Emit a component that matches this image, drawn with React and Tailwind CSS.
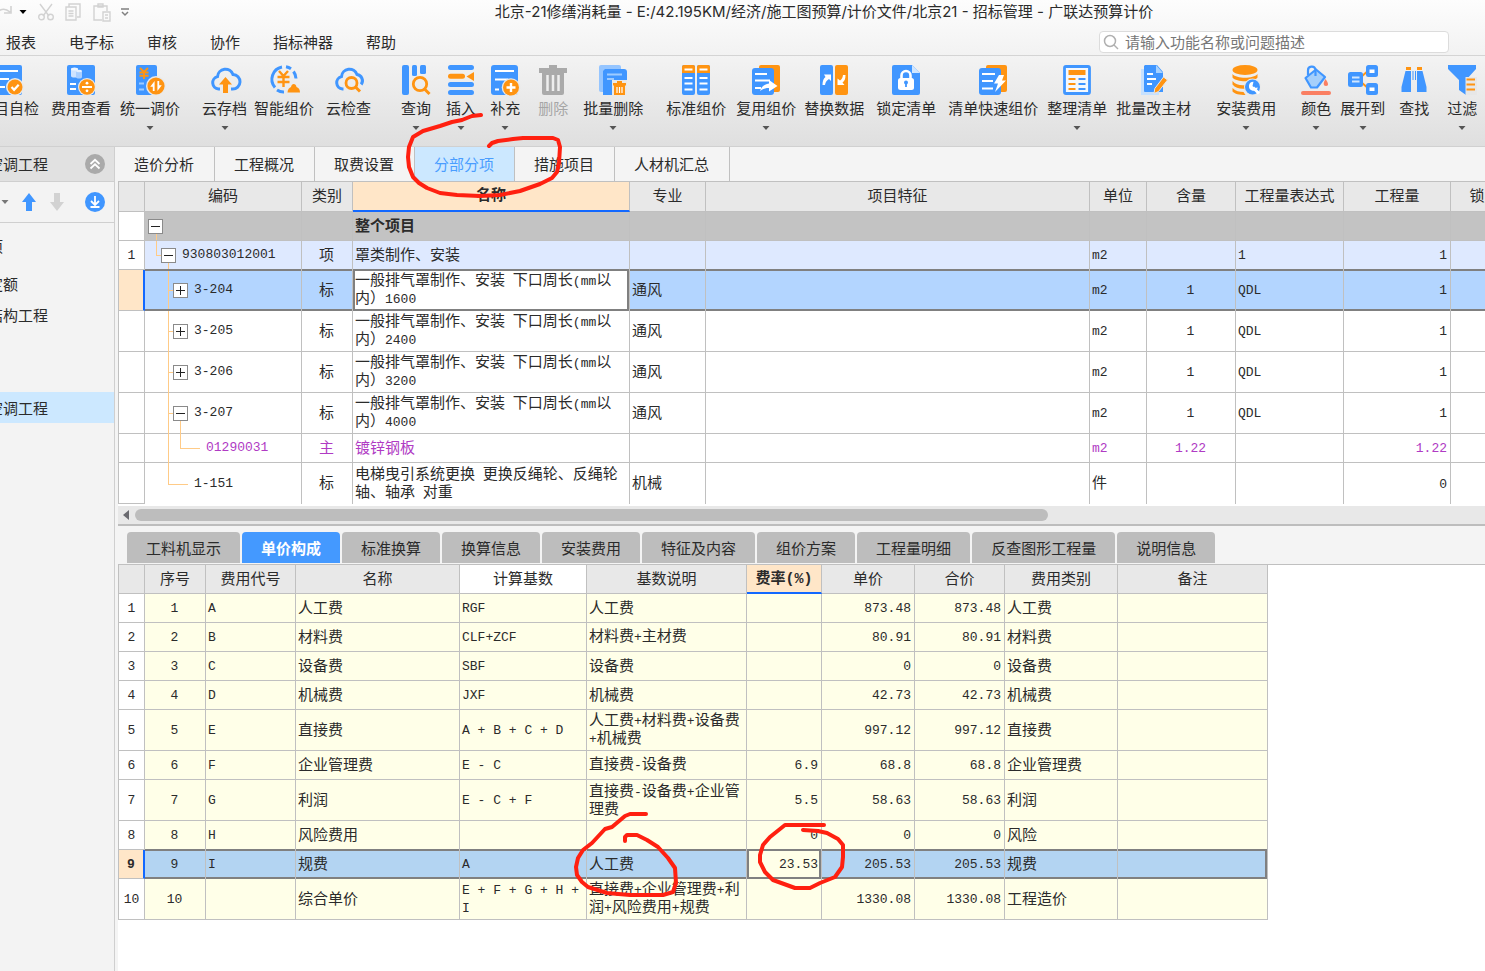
import clsx from "clsx";

const toolIcons = {
  check: (
    <>
      <rect width="27" height="30" rx="2" fill="#4096ff" />
      <path d="M4 6h19M4 14h10M4 22h6" stroke="#fff" strokeWidth="2" />
      <circle cx="20" cy="22" r="9" fill="#e9e9e9" />
      <circle cx="20" cy="22" r="7.5" fill="#ff9412" />
      <path d="M16.5 22l2.6 2.8 4.6-5" fill="none" stroke="#fff" strokeWidth="2.2" />
    </>
  ),
  cost: (
    <>
      <rect width="28" height="30" rx="2" fill="#4096ff" />
      <path d="M4 4v7c0 2 7 2 7 0V4z" fill="#cfe4ff" />
      <ellipse cx="7.5" cy="4" rx="3.5" ry="1.5" fill="#eef6ff" />
      <path d="M9 6v6c0 2 6 2 6 0V6z" fill="#a9cfff" />
      <ellipse cx="12" cy="6" rx="3" ry="1.3" fill="#e4f0ff" />
      <path d="M3 19h6M3 24h6" stroke="#fff" strokeWidth="2.2" />
      <circle cx="20" cy="22" r="9" fill="#e9e9e9" />
      <circle cx="20" cy="22" r="7.8" fill="#ff9412" />
      <path d="M15 22h10" stroke="#fff" strokeWidth="2" />
      <circle cx="20" cy="18.2" r="1.4" fill="#fff" />
      <circle cx="20" cy="25.8" r="1.4" fill="#fff" />
    </>
  ),
  adjust: (
    <>
      <rect width="21" height="30" rx="2" fill="#4096ff" />
      <path d="M4 3l4 4 4-4M8 7v7M3.5 7.5h9M3.5 10.8h9" fill="none" stroke="#ff9412" strokeWidth="1.9" />
      <path d="M3 18.5h5M3 24.5h5" stroke="#9ecbff" strokeWidth="2.2" />
      <circle cx="20" cy="21" r="10" fill="#e9e9e9" />
      <circle cx="20" cy="21" r="8.6" fill="#ff9412" />
      <path d="M18.6 16v10h-1.8v-4.2h-2.6zM21.4 26V16h1.8v4.2h2.6z" fill="#fff" />
    </>
  ),
  cloudUp: (
    <>
      <path d="M9 24H7.500a6.300 6.300 0 0 1-1-12.400A8 8 0 0 1 22 9.500a6.300 6.300 0 0 1-.5 14.500H20" fill="none" stroke="#4096ff" strokeWidth="3" />
      <path d="M14.500 12l6.500 7.500h-4V28h-5v-8.500h-4z" fill="#ff9412" />
    </>
  ),
  smart: (
    <>
      <path d="M5 22.500A12.500 12.500 0 0 1 12 2M16 1.800a12.500 12.500 0 0 1 5 2M23.500 6.500a12.500 12.500 0 0 1 2.500 7M7 25a12 12 0 0 0 7 2" fill="none" stroke="#4096ff" strokeWidth="3" />
      <path d="M9 6l4.500 5 4.500-5M13.500 11v11M7.500 12h12M7.500 17h12" fill="none" stroke="#ff9412" strokeWidth="2.400" />
      <path d="M17.500 27.500c0-3 2-5 3.500-5.500.5-4 5-4 5.500 0 2 .5 3.500 2.500 3.500 5.500z" fill="#ff9412" />
    </>
  ),
  cloudSearch: (
    <>
      <path d="M8.500 24h-1a6.300 6.300 0 0 1-1-12.400A8 8 0 0 1 22 9.500a6.300 6.300 0 0 1 4.200 10" fill="none" stroke="#4096ff" strokeWidth="3" />
      <circle cx="16.500" cy="18" r="5.500" fill="none" stroke="#ff9412" strokeWidth="2.800" />
      <path d="M20.500 22l4.500 4.500" stroke="#ff9412" strokeWidth="3" />
    </>
  ),
  query: (
    <>
      <rect width="7" height="30" rx="2" fill="#4096ff" />
      <rect x="10" width="5" height="11" rx="1.500" fill="#4096ff" />
      <rect x="18" width="6" height="9" rx="1.500" fill="#4096ff" />
      <circle cx="18" cy="19" r="6.700" fill="none" stroke="#ff9412" strokeWidth="2.800" />
      <path d="M22.500 24l5 5" stroke="#ff9412" strokeWidth="3" />
    </>
  ),
  insert: (
    <>
      <path d="M3.500 2.500h21M3.500 19.500h21M3.500 27.500h21" stroke="#4096ff" strokeWidth="5" strokeLinecap="round" />
      <path d="M3.500 11.300h12" stroke="#ff9412" strokeWidth="5" strokeLinecap="round" />
      <path d="M27 7v9l-7.500-4.500z" fill="#ff9412" />
    </>
  ),
  supplement: (
    <>
      <rect width="27" height="30" rx="3" fill="#4096ff" />
      <path d="M4 6h19M4 14.500h13M4 24.500h4" stroke="#fff" strokeWidth="2.200" />
      <circle cx="20" cy="22.500" r="9.300" fill="#e9e9e9" />
      <circle cx="20" cy="22.500" r="8" fill="#ff9412" />
      <path d="M20 18v9M15.500 22.500h9" stroke="#fff" strokeWidth="2.400" />
    </>
  ),
  remove: (
    <>
      <path d="M10 0h8v3h-8z" fill="#aaa" />
      <path d="M0 3h28v5H0z" fill="#aaa" />
      <path d="M3 8h22v20a2 2 0 0 1-2 2H5a2 2 0 0 1-2-2z" fill="#aaa" />
      <path d="M8.500 10v16M14 10v16M19.500 10v16" stroke="#eee" strokeWidth="2.500" />
    </>
  ),
  batchRemove: (
    <>
      <rect width="22" height="27" rx="2" fill="#95c5ff" />
      <path d="M6 4h19a3 3 0 0 1 3 3v23H4V6z" fill="#4096ff" />
      <path d="M8 9.500h15M8 14h7" stroke="#9ecbff" strokeWidth="2" />
      <path d="M13 15h15v15H13z" fill="#e9e9e9" />
      <path d="M18 16h5v2h-5zM14 18h13v2.500H14zM15 20h11v10H15z" fill="#ff9412" />
      <path d="M18 22v6M20.500 22v6M23 22v6" stroke="#fff" strokeWidth="1.200" />
    </>
  ),
  standard: (
    <>
      <rect width="13" height="30" rx="2" fill="#4096ff" />
      <rect x="15" width="13" height="30" rx="2" fill="#4096ff" />
      <path d="M0 8V2a2 2 0 0 1 2-2h9a2 2 0 0 1 2 2v6zM15 8V2a2 2 0 0 1 2-2h9a2 2 0 0 1 2 2v6z" fill="#ff9412" />
      <path d="M2.500 4.500h8M17.500 4.500h8M2.500 13h8M17.500 13h8M2.500 18.500h8M17.500 18.500h8M2.500 24.500h8M17.500 24.500h8" stroke="#fff" strokeWidth="1.800" />
    </>
  ),
  reuse: (
    <>
      <rect x="7" width="21" height="27" rx="2" fill="#ff9412" />
      <rect y="3" width="22" height="27" rx="3" fill="#4096ff" />
      <path d="M3 9h12M3 15.500h15M3 23h6" stroke="#fff" strokeWidth="2.200" />
      <path d="M8 26c2-5 5-7 9-7.500V15l8.500 6-8.500 5.500V23c-4 0-6.500 1-9 3z" fill="#fff" />
    </>
  ),
  replace: (
    <>
      <rect width="13" height="30" rx="2" fill="#4096ff" />
      <rect x="15" width="13" height="30" rx="2" fill="#ff9412" />
      <path d="M2.500 20c0-4 1-6.500 3-8L4 9.500h7V16l-2-2c-2.500 1.500-3.500 3-4 6zM25.500 10c0 4-1 6-3 7.500l2 2.500h-7v-6.500l2.500 2C22 14 22.500 13 23 10z" fill="#fff" />
    </>
  ),
  lock: (
    <>
      <path d="M2 0h18l8 8v20a2 2 0 0 1-2 2H2a2 2 0 0 1-2-2V2a2 2 0 0 1 2-2z" fill="#4096ff" />
      <path d="M20 0l8 8h-8z" fill="#cfe6ff" />
      <rect x="6" y="13" width="16" height="12" rx="2.500" fill="#fff" />
      <path d="M9.500 14v-3.500a4.500 4.500 0 0 1 9 0V14" fill="none" stroke="#fff" strokeWidth="2.600" />
      <circle cx="14" cy="17.500" r="2" fill="#4096ff" />
      <path d="M14 18v4" stroke="#4096ff" strokeWidth="1.800" />
    </>
  ),
  quick: (
    <>
      <rect x="7" width="21" height="27" rx="2" fill="#ff9412" />
      <rect y="3" width="22" height="27" rx="3" fill="#4096ff" />
      <path d="M3 9h13M3 16h11M3 23.500h11" stroke="#fff" strokeWidth="2.200" />
      <path d="M20 10h5l-2 5.500h4L16 27l3-8.500h-4z" fill="#fff" />
    </>
  ),
  arrange: (
    <>
      <rect x="1.500" y="1.500" width="25" height="27" rx="1.500" fill="#f4f8fd" stroke="#4096ff" strokeWidth="2.800" />
      <path d="M5.500 7.500h17" stroke="#ff9412" strokeWidth="5" />
      <path d="M5.500 14h7M5.500 19h7M5.500 24h7" stroke="#ff9412" strokeWidth="1.800" />
      <path d="M15.500 14h7M15.500 19h7M15.500 24h7" stroke="#4096ff" strokeWidth="1.800" />
    </>
  ),
  material: (
    <>
      <path d="M1 4h18v26H1z" fill="#c6e1ff" />
      <path d="M5 0h12l6 7v20H5a1 1 0 0 1-1-1V1z" fill="#4096ff" />
      <path d="M16 0l7 8h-7z" fill="#a9d3ff" />
      <path d="M7 9h6M7 14h9M7 19h5" stroke="#fff" strokeWidth="2" />
      <path d="M23.500 12l4 3-9 11.500-4.500 2 .8-5z" fill="#ff9412" stroke="#e9e9e9" />
    </>
  ),
  install: (
    <>
      <ellipse cx="13" cy="5" rx="12.500" ry="5" fill="#ff9412" />
      <path d="M.5 9c4 5 21 5 25 0v3.500c-4 5-21 5-25 0zM.5 16c3 4 9 5 14 4v3.500c-5 1-11 0-14-4zM.5 23c3 3 7 4 11 4l2 3c-6 0-11-1-13-3.500z" fill="#ff9412" />
      <circle cx="20.500" cy="22" r="8.500" fill="#e9e9e9" />
      <circle cx="20.500" cy="22" r="7.500" fill="#4096ff" />
      <path d="M27 28.500l-6-6" stroke="#fff" strokeWidth="3" />
      <path d="M21.500 16.800a4.500 4.500 0 1 0 4.300 5.700l-3.300.5-2-2z" fill="#fff" />
    </>
  ),
  color: (
    <>
      <path d="M3.500 13L14 4.500l9 7.500-8 10.500H9z" fill="#a5cffb" stroke="#4096ff" strokeWidth="2.200" strokeLinejoin="round" />
      <path d="M6 10V5.500a3.800 3.800 0 0 1 7.500-1V11" fill="none" stroke="#4096ff" strokeWidth="2.200" />
      <path d="M23.500 14c3 4 3.500 7 .5 7s-3-3-.5-7z" fill="#fa7f62" />
      <path d="M1 28h26" stroke="#fa7f62" strokeWidth="4" strokeLinecap="round" />
    </>
  ),
  expand: (
    <>
      <path d="M12 12l8-7M12 17l8 7" stroke="#ff9412" strokeWidth="2" />
      <rect x="-1" y="7" width="15" height="15" rx="2.500" fill="#4096ff" />
      <rect x="17" width="12" height="12" rx="2.500" fill="#4096ff" />
      <rect x="17" y="18" width="12" height="12" rx="2.500" fill="#4096ff" />
      <path d="M3 12.500h7.500M3 16.500h7.500" stroke="#cfe6ff" strokeWidth="2" />
      <path d="M20.500 4.500h5v3.500h-5zM20.500 22.500h5v3.500h-5z" fill="#fff" />
    </>
  ),
  find: (
    <>
      <path d="M6 2h5v3H6zM17 2h5v3h-5z" fill="#ff9412" />
      <path d="M5.500 6H11v21H1.500v-5zM22.500 6H17v21h9.500v-5z" fill="#4096ff" />
      <path d="M12.500 6h1v9h-1zM15 6h1v9h-1z" fill="#4096ff" />
    </>
  ),
  filter: (
    <>
      <path d="M0 0h28v4L18 15v15l-7-5V15L0 4z" fill="#4096ff" />
      <path d="M17.500 12H29v18H17.500z" fill="#e7e7e7" />
      <path d="M18.500 14.500h8.500M18.500 19.500h8.500M18.500 24.500h8.500" stroke="#ff9412" strokeWidth="2" />
    </>
  )
};

const tools = [
  { label: "项目自检", icon: "check", gap: "" },
  { label: "费用查看", icon: "cost", gap: "ml-3" },
  { label: "统一调价", icon: "adjust", gap: "ml-[9px]", menu: true },
  { label: "云存档", icon: "cloudUp", gap: "ml-[22px]", menu: true },
  { label: "智能组价", icon: "smart", gap: "ml-[7px]" },
  { label: "云检查", icon: "cloudSearch", gap: "ml-3" },
  { label: "查询", icon: "query", gap: "ml-[30px]", menu: true },
  { label: "插入", icon: "insert", gap: "ml-[15px]", menu: true },
  { label: "补充", icon: "supplement", gap: "ml-[14px]", menu: true },
  { label: "删除", icon: "remove", gap: "ml-[18px]", disabled: true },
  { label: "批量删除", icon: "batchRemove", gap: "ml-[15px]", menu: true },
  { label: "标准组价", icon: "standard", gap: "ml-[23px]" },
  { label: "复用组价", icon: "reuse", gap: "ml-[10px]", menu: true },
  { label: "替换数据", icon: "replace", gap: "ml-2" },
  { label: "锁定清单", icon: "lock", gap: "ml-3" },
  { label: "清单快速组价", icon: "quick", gap: "ml-3" },
  { label: "整理清单", icon: "arrange", gap: "ml-[9px]", menu: true },
  { label: "批量改主材", icon: "material", gap: "ml-[9px]" },
  { label: "安装费用", icon: "install", gap: "ml-[25px]", menu: true },
  { label: "颜色", icon: "color", gap: "ml-[25px]", menu: true },
  { label: "展开到", icon: "expand", gap: "ml-[9px]", menu: true },
  { label: "查找", icon: "find", gap: "ml-[14px]" },
  { label: "过滤", icon: "filter", gap: "ml-[18px]", menu: true }
];

const menus = ["报表", "电子标", "审核", "协作", "指标神器", "帮助"];
const pageTabs = ["造价分析", "工程概况", "取费设置", "分部分项", "措施项目", "人材机汇总"];
const detailTabs = [
  "工料机显示",
  "单价构成",
  "标准换算",
  "换算信息",
  "安装费用",
  "特征及内容",
  "组价方案",
  "工程量明细",
  "反查图形工程量",
  "说明信息"
];
const projects = ["定额", "结构工程", "", "", "空调工程"];

const itemColumns = [
  { title: "编码", width: "w-[157px]" },
  { title: "类别", width: "w-[51px]", align: "text-center" },
  { title: "名称", width: "w-[277px]", active: true },
  { title: "专业", width: "w-[76px]" },
  { title: "项目特征", width: "w-[384px]" },
  { title: "单位", width: "w-[57px]" },
  { title: "含量", width: "w-[89px]", align: "text-center" },
  { title: "工程量表达式", width: "w-[108px]" },
  { title: "工程量", width: "w-[107px]", align: "text-right" },
  { title: "锁定综合单价", width: "w-[128px]" }
];

const items = [
  { kind: "root", level: 0, open: true, cells: ["", "", "整个项目", "", "", "", "", "", "", ""] },
  { kind: "bill", no: "1", level: 1, open: true, cells: ["930803012001", "项", "罩类制作、安装", "", "", "m2", "", "1", "1", ""] },
  { kind: "selected", level: 2, open: false, cells: ["3-204", "标", "一般排气罩制作、安装 下口周长(mm以内）1600", "通风", "", "m2", "1", "QDL", "1", ""] },
  { level: 2, open: false, cells: ["3-205", "标", "一般排气罩制作、安装 下口周长(mm以内）2400", "通风", "", "m2", "1", "QDL", "1", ""] },
  { level: 2, open: false, cells: ["3-206", "标", "一般排气罩制作、安装 下口周长(mm以内）3200", "通风", "", "m2", "1", "QDL", "1", ""] },
  { level: 2, open: true, cells: ["3-207", "标", "一般排气罩制作、安装 下口周长(mm以内）4000", "通风", "", "m2", "1", "QDL", "1", ""] },
  { kind: "material", level: 3, cells: ["01290031", "主", "镀锌钢板", "", "", "m2", "1.22", "", "1.22", ""] },
  { kind: "last", level: 2, cells: ["1-151", "标", "电梯曳引系统更换 更换反绳轮、反绳轮轴、轴承 对重", "机械", "", "件", "", "", "0", ""] }
];

const feeColumns = [
  { title: "序号", width: "w-[61px]", align: "text-center" },
  { title: "费用代号", width: "w-[90px]" },
  { title: "名称", width: "w-[164px]" },
  { title: "计算基数", width: "w-[127px]", plain: true },
  { title: "基数说明", width: "w-[160px]" },
  { title: "费率(%)", width: "w-[75px]", align: "text-right", active: true },
  { title: "单价", width: "w-[93px]", align: "text-right" },
  { title: "合价", width: "w-[90px]", align: "text-right" },
  { title: "费用类别", width: "w-[113px]" },
  { title: "备注", width: "w-[150px]" }
];

const fees = [
  ["1", "A", "人工费", "RGF", "人工费", "", "873.48", "873.48", "人工费", ""],
  ["2", "B", "材料费", "CLF+ZCF", "材料费+主材费", "", "80.91", "80.91", "材料费", ""],
  ["3", "C", "设备费", "SBF", "设备费", "", "0", "0", "设备费", ""],
  ["4", "D", "机械费", "JXF", "机械费", "", "42.73", "42.73", "机械费", ""],
  ["5", "E", "直接费", "A + B + C + D", "人工费+材料费+设备费+机械费", "", "997.12", "997.12", "直接费", ""],
  ["6", "F", "企业管理费", "E - C", "直接费-设备费", "6.9", "68.8", "68.8", "企业管理费", ""],
  ["7", "G", "利润", "E - C + F", "直接费-设备费+企业管理费", "5.5", "58.63", "58.63", "利润", ""],
  ["8", "H", "风险费用", "", "", "0", "0", "0", "风险", ""],
  ["9", "I", "规费", "A", "人工费", "23.53", "205.53", "205.53", "规费", ""],
  ["10", "", "综合单价", "E + F + G + H + I", "直接费+企业管理费+利润+风险费用+规费", "", "1330.08", "1330.08", "工程造价", ""]
];
const tallFees = ["5", "7", "10"];
const selectedFee = "9";

const levelPadding = ["pl-[3px]", "pl-4", "pl-7", "pl-10"];
const rowFill = {
  root: "bg-[#c3c3c3]",
  bill: "bg-[#dee9ff]",
  selected: "bg-[#b3d5ff]"
};

// Grid text: latin runs are set in the narrow monospaced face
const GridText = ({ children }) =>
  children.split(/([\x20-\x7e]+)/).map((part, i) =>
    i % 2 ? (
      <span key={i} className="font-['Liberation_Mono',monospace] text-[13px] leading-none">
        {part}
      </span>
    ) : (
      part
    )
  );

const Caret = ({ className }) => (
  <svg viewBox="0 0 8 4" className={clsx("h-1 w-2", className)} aria-hidden="true">
    <path d="M0.500 0h7L4 4z" fill="currentColor" />
  </svg>
);

const TitleBar = () => (
  <header className="flex h-6 items-center">
    <div className="flex w-[163px] shrink-0 items-center text-[#d2d2d2]">
      <button type="button" aria-label="重做" className="-ml-1">
        <svg viewBox="0 0 18 18" className="size-[18px]" fill="none" stroke="currentColor" strokeWidth="1.600">
          <path d="M2 15c-3-7 5-12 12-6M15 3v7H8" />
        </svg>
      </button>
      <Caret className="ml-[5px] text-black" />
      <button type="button" aria-label="剪切" className="ml-[10px]">
        <svg viewBox="0 0 18 18" className="size-[18px]" fill="none" stroke="currentColor" strokeWidth="1.400">
          <path d="M3 1l9 12M15 1L6 13" />
          <circle cx="4.500" cy="14" r="2.800" />
          <circle cx="13.500" cy="14" r="2.800" />
        </svg>
      </button>
      <button type="button" aria-label="复制" className="ml-[10px]">
        <svg viewBox="0 0 16 18" className="h-[18px] w-4" fill="none" stroke="currentColor" strokeWidth="1.400">
          <path d="M4 4V1h11v13h-3" />
          <path d="M1 4h10v13H1zM3.500 8h5M3.500 10.500h5M3.500 13h5" />
        </svg>
      </button>
      <button type="button" aria-label="粘贴" className="ml-3">
        <svg viewBox="0 0 18 19" className="h-[19px] w-[18px]" fill="none" stroke="currentColor" strokeWidth="1.400">
          <path d="M9 17H1V3h13v5M5 3V1h5v3H5z" />
          <path d="M10 9h7v9h-7zM12 12h3M12 15h3" />
        </svg>
      </button>
      <button type="button" aria-label="自定义快速访问工具栏" className="ml-[10px] text-[#808080]">
        <svg viewBox="0 0 8 9" className="h-[9px] w-2" fill="none" stroke="currentColor" strokeWidth="1.500">
          <path d="M0 1h8M1 4l3 3 3-3" />
        </svg>
      </button>
    </div>
    <h1 className="flex-1 truncate text-center font-['Inter','Noto_Sans_CJK_SC',sans-serif]">
      北京-21修缮消耗量 - E:/42.195KM/经济/施工图预算/计价文件/北京21 - 招标管理 - 广联达预算计价
    </h1>
  </header>
);

const MenuBar = () => (
  <div className="flex items-center justify-between border-b border-[#d4d4d4] pt-[7px] pr-9 pb-0.5 pl-1.5">
    <nav className="flex gap-[33px]">
      {menus.map((name) => (
        <button key={name} type="button">
          {name}
        </button>
      ))}
    </nav>
    <label className="flex h-[22px] w-[350px] items-center gap-[6px] rounded-sm border border-[#dcdcdc] bg-white px-[3px]">
      <svg viewBox="0 0 16 16" className="size-4" fill="none" stroke="#b0b0b0" strokeWidth="1.500">
        <circle cx="7" cy="7" r="5.500" />
        <path d="M11 11l4 4" />
      </svg>
      <input
        type="search"
        aria-label="搜索功能"
        placeholder="请输入功能名称或问题描述"
        className="min-w-0 flex-1 leading-5 outline-none placeholder:text-[#777]"
      />
    </label>
  </div>
);

const Toolbar = () => (
  <div className="overflow-hidden border-b border-[#d0d0d0] bg-linear-to-b from-[#f3f3f3] to-[#dfdfdf]">
    <div className="-ml-[21px] flex h-[90px] items-start pt-[9px]">
      {tools.map((tool) => (
        <button
          key={tool.label}
          type="button"
          disabled={tool.disabled}
          className={clsx("flex shrink-0 flex-col items-center", tool.gap, tool.disabled && "text-[#a6a6a6]")}
        >
          <svg viewBox="0 0 28 30" className="h-[30px] w-7 overflow-visible" aria-hidden="true">
            {toolIcons[tool.icon]}
          </svg>
          <span className="mt-[3px] leading-5">{tool.label}</span>
          {tool.menu && <Caret className="mt-2 text-[#555]" />}
        </button>
      ))}
    </div>
  </div>
);

const Sidebar = () => (
  <aside className="w-[115px] shrink-0 overflow-hidden border-r border-[#cfcfcf] bg-[#f3f3f3]">
    <div className="flex h-[35px] items-center justify-between border-b border-[#cfcfcf] bg-[#e1e1e1] pr-[9px]">
      <span className="-ml-3">空调工程</span>
      <button type="button" aria-label="收起">
        <svg viewBox="0 0 20 20" className="size-5" fill="none" stroke="#fff" strokeWidth="1.800">
          <circle cx="10" cy="10" r="10" fill="#aaa" stroke="none" />
          <path d="M5.500 10L10 5.800l4.500 4.200M5.500 14.500l4.500-4.200 4.500 4.200" />
        </svg>
      </button>
    </div>
    <div className="flex h-[41px] items-center border-b border-[#cfcfcf] pr-[9px] pl-px">
      <Caret className="text-[#777]" />
      <button type="button" aria-label="上移" className="ml-3">
        <svg viewBox="0 0 16 18" className="h-[18px] w-4">
          <path d="M8 0l7 9h-4v9H5V9H1z" fill="#4096ff" />
        </svg>
      </button>
      <button type="button" aria-label="下移" className="ml-3" disabled>
        <svg viewBox="0 0 16 18" className="h-[18px] w-4">
          <path d="M8 18l7-9h-4V0H5v9H1z" fill="#d2d2d2" />
        </svg>
      </button>
      <button type="button" aria-label="导入" className="ml-auto">
        <svg viewBox="0 0 20 20" className="size-5" fill="none" stroke="#fff" strokeWidth="1.800">
          <circle cx="10" cy="10" r="10" fill="#4096ff" stroke="none" />
          <path d="M10 4v8M6 9l4 4 4-4M5.500 15h9" />
        </svg>
      </button>
    </div>
    <ul>
      <li className="flex h-[45px] items-center">
        <span className="-ml-3">项</span>
      </li>
      {projects.map((name, i) => (
        <li key={i} className={clsx("flex h-[31px] items-center", i === 4 && "bg-[#cce8ff]")}>
          <span className="-ml-3">{name}</span>
        </li>
      ))}
    </ul>
  </aside>
);

const HeaderRow = ({ columns, height }) => (
  <thead>
    <tr className={height}>
      <th className="w-[27px] border-r border-b border-l border-[#c0c0c0] bg-[#e8e8e8]" />
      {columns.map((col) => (
        <th
          key={col.title}
          className={clsx(
            "overflow-hidden border-r border-[#c0c0c0] px-0 pb-0 font-['Liberation_Mono','Noto_Sans_CJK_SC',monospace] leading-5 whitespace-nowrap",
            col.width,
            col.active
              ? "border-b-2 border-b-[#1268ff] bg-[#ffe6c8] pt-0.5 font-bold"
              : "border-b pt-[3px] font-normal",
            !col.active && (col.plain ? "bg-white" : "bg-[#e8e8e8]")
          )}
        >
          {col.title}
        </th>
      ))}
    </tr>
  </thead>
);

const Twig = ({ className }) => <i className={clsx("absolute bg-[#ffcb87]", className)} />;

const TreeCell = ({ item, index }) => (
  <div className={clsx("flex h-full items-center", levelPadding[item.level])}>
    {index === 0 && <Twig className="top-1/2 bottom-0 left-[11px] w-px" />}
    {index === 1 && (
      <>
        <Twig className="top-0 left-[11px] h-1/2 w-px" />
        <Twig className="top-1/2 left-[11px] h-px w-2" />
        <Twig className="top-1/2 bottom-0 left-[23px] w-px" />
      </>
    )}
    {index > 1 && <Twig className={clsx("top-0 left-[23px] w-px", item.kind === "last" ? "h-1/2" : "-bottom-px")} />}
    {item.level === 2 && <Twig className={clsx("top-1/2 left-[23px] h-px", item.kind === "last" ? "w-5" : "w-2")} />}
    {index === 5 && <Twig className="top-1/2 -bottom-px left-[35px] w-px" />}
    {item.level === 3 && (
      <>
        <Twig className="top-0 left-[35px] h-1/2 w-px" />
        <Twig className="top-1/2 left-[35px] h-px w-5" />
      </>
    )}
    {item.open === undefined ? (
      <span className="w-[15px]" />
    ) : (
      <button
        type="button"
        aria-label={item.open ? "折叠" : "展开"}
        className="relative flex size-[15px] items-center justify-center border border-[#8a8a8a] bg-white"
      >
        <svg viewBox="0 0 9 9" className="size-[9px]" stroke="#222">
          <path d={item.open ? "M0 4.500h9" : "M0 4.500h9M4.500 0v9"} />
        </svg>
      </button>
    )}
    <span className="pb-1.5 pl-1.5">
      <GridText>{item.cells[0]}</GridText>
    </span>
  </div>
);

// Dark frame that runs along the selected row
const rowFrame =
  "after:pointer-events-none after:absolute after:-top-px after:right-0 after:bottom-[-1px] after:left-0 after:border-y-2 after:border-[#808080]";

const ItemTable = () => (
  <div className="overflow-hidden bg-white">
    <table className="w-[1461px] table-fixed border-separate border-spacing-0">
      <HeaderRow columns={itemColumns} height="h-[30px]" />
      <tbody>
        {items.map((item, index) => {
          const selected = item.kind === "selected";
          const last = item.kind === "last";
          return (
            <tr
              key={index}
              className={clsx(
                "leading-[17px]",
                item.kind === "root" || item.kind === "bill" || item.kind === "material" ? "h-[29px]" : "h-[41px]",
                item.kind === "material" && "text-[#b03bc4]"
              )}
            >
              <td
                className={clsx(
                  "border-b border-l border-[#c0c0c0] px-0 pt-0 pb-1 text-center",
                  selected ? "border-r-2 border-r-[#1268ff] bg-[#ffe6c8]" : "border-r"
                )}
              >
                <GridText>{item.no || ""}</GridText>
              </td>
              {item.cells.map((text, i) => {
                const editing = selected && i === 2;
                return (
                  <td
                    key={i}
                    className={clsx(
                      "relative border-r border-[#c0c0c0] pt-0",
                      !last && "border-b",
                      i === 0 ? "h-px px-0 pb-0" : "pr-[3px] pb-1 pl-0.5",
                      itemColumns[i].align,
                      item.kind === "root" && "font-bold",
                      selected && rowFrame,
                      editing ? "bg-white after:border-x-2" : rowFill[item.kind]
                    )}
                  >
                    {i === 0 ? <TreeCell item={item} index={index} /> : <GridText>{text}</GridText>}
                  </td>
                );
              })}
            </tr>
          );
        })}
      </tbody>
    </table>
  </div>
);

const ScrollBar = () => (
  <div className="flex h-[22px] items-center border-y-2 border-t-white border-b-[#bdbdbd] bg-[#e8e8e8] pl-[5px]">
    <svg viewBox="0 0 6 10" className="h-[10px] w-1.5">
      <path d="M6 0v10L0 5z" fill="#6a6a70" />
    </svg>
    <div className="ml-1.5 h-3 w-[67%] rounded-full bg-[#bdbdbd]" />
  </div>
);

const FeeTable = () => (
  <div className="overflow-hidden">
    <table className="w-[1150px] table-fixed border-separate border-spacing-0">
      <HeaderRow columns={feeColumns} height="h-[29px]" />
      <tbody>
        {fees.map((row) => {
          const selected = row[0] === selectedFee;
          return (
            <tr
              key={row[0]}
              className={clsx("leading-[17px]", tallFees.includes(row[0]) ? "h-[41px]" : "h-[29px]")}
            >
              <td
                className={clsx(
                  "border-b border-l border-[#c0c0c0] px-0 pt-0 pb-1 text-center",
                  selected ? "border-r-2 border-r-[#1268ff] bg-[#ffe6c8] font-bold" : "border-r bg-white"
                )}
              >
                <GridText>{row[0]}</GridText>
              </td>
              {row.map((text, i) => (
                <td
                  key={i}
                  className={clsx(
                    "relative border-r border-b border-[#c0c0c0] pt-0 pr-[3px] pb-1 pl-0.5",
                    feeColumns[i].align,
                    selected && rowFrame,
                    selected && i === 5 && "after:border-x-2",
                    selected && i === 9 && "after:border-r-2",
                    selected && i !== 5 ? "bg-[#b3d4f2]" : "bg-[#ffffe8]"
                  )}
                >
                  <GridText>{text}</GridText>
                </td>
              ))}
            </tr>
          );
        })}
      </tbody>
    </table>
  </div>
);

// Freehand marker notes drawn over the window
const MarkerNotes = () => (
  <svg
    className="pointer-events-none absolute top-0 left-0 z-10 h-[971px] w-[1485px]"
    viewBox="0 0 1485 971"
    fill="none"
    stroke="#ff2010"
    strokeWidth="4"
    strokeLinecap="round"
    strokeLinejoin="round"
    aria-hidden="true"
  >
    <path d="M481 115L472 116 462 120 452 122 440 126 423 131 413 137 409 147 408 157 409 167 413 177 419 183 427 188 440 193 457 195 480 196 500 195 520 191 540 184 552 178 557 172 559 163 560 147 558 140 553 138 523 138 513 139 498 141 492 143 489 146" />
    <path d="M646 814L630 814 625 816 612 827 605 829 592 843 583 850 578 858 576 867 577 875 582 882 588 887 607 893 630 895 663 895 673 892 676 883 675 868 668 858 658 847 647 840 637 835 627 835 625 837 625 841" />
    <path d="M824 825L785 825 770 837 763 845 760 855 760 862 765 872 773 880 795 888 810 888 820 883 835 877 842 867 843 857 843 845 838 839 827 833 818 831 803 830" />
  </svg>
);

const App = () => (
  <div className="relative flex min-h-screen flex-col overflow-hidden bg-[#f3f3f3] font-['Open_Sans','Noto_Sans_CJK_SC',sans-serif] text-[15px] leading-[22px] text-[#2b2b2b]">
    <div className="bg-linear-to-b from-[#fdfdfd] to-[#f2f2f2]">
      <TitleBar />
      <MenuBar />
    </div>
    <Toolbar />
    <div className="flex flex-1">
      <Sidebar />
      <main className="flex min-w-0 flex-1 flex-col bg-[#f4f4f4]">
        <nav className="flex h-[34px]">
          {pageTabs.map((name) => (
            <button
              key={name}
              type="button"
              className={clsx(
                "border-r border-[#c0c0c0] pr-5 pl-[19px]",
                name === "分部分项" && "bg-[#cce8ff] text-[#4a9dff]"
              )}
            >
              {name}
            </button>
          ))}
        </nav>
        <div className="ml-[3px] flex flex-1 flex-col border-t border-[#c0c0c0] font-['Noto_Sans_CJK_SC',sans-serif]">
          <ItemTable />
          <ScrollBar />
          <nav className="flex gap-0.5 pt-1.5 pl-[9px] font-['Open_Sans','Noto_Sans_CJK_SC',sans-serif]">
            {detailTabs.map((name) => (
              <button
                key={name}
                type="button"
                className={clsx(
                  "h-[31px] rounded-t-sm px-[19px]",
                  name === "单价构成" ? "bg-[#4499ff] font-bold text-white" : "bg-[#bdbdbd]"
                )}
              >
                {name}
              </button>
            ))}
          </nav>
          <div className="mt-px flex-1 border-t border-[#c0c0c0] bg-white">
            <FeeTable />
          </div>
        </div>
      </main>
    </div>
    <MarkerNotes />
  </div>
);

export default App;
